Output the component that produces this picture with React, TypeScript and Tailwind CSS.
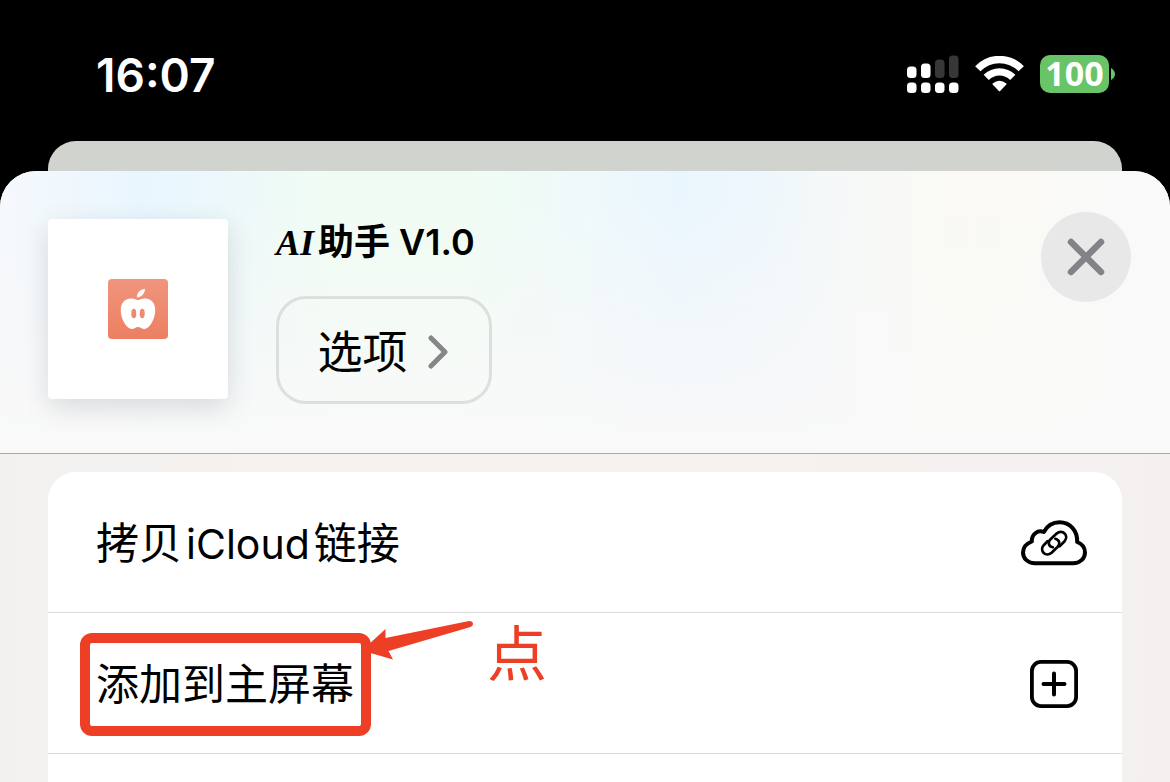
import type { ReactNode } from 'react';

const sans = "font-['Inter','Noto_Sans_CJK_SC',sans-serif]";

function SignalIcon() {
  return (
    <svg width="52" height="38" viewBox="0 0 52 38" aria-hidden="true">
      <g fill="#fff">
        <rect x="0" y="11.5" width="9.5" height="11.5" rx="3.5" />
        <rect x="14" y="8.5" width="9.5" height="14.5" rx="3.5" />
        <rect x="0" y="27.5" width="9.5" height="10.5" rx="3.5" />
        <rect x="14" y="27.5" width="9.5" height="10.5" rx="3.5" />
        <rect x="28" y="27.5" width="9.5" height="10.5" rx="3.5" />
        <rect x="42" y="27.5" width="9.5" height="10.5" rx="3.5" />
      </g>
      <g fill="#383636">
        <rect x="28" y="4.5" width="9.5" height="18.5" rx="3.5" />
        <rect x="42" y="0.5" width="9.5" height="22.5" rx="3.5" />
      </g>
    </svg>
  );
}

function WifiIcon() {
  return (
    <svg width="49" height="37" viewBox="0 0 49 37" aria-hidden="true">
      <g fill="none" stroke="#fff" strokeWidth="7.4">
        <path d="M2.8 12.8C14.8 .4 34.2 .4 46.2 12.8" />
        <path d="M11.2 21.4C18.8 14 30.2 14 37.800 21.400" />
      </g>
      <path d="M17.6 27.500Q24.5 22 31.4 27.500Q31.8 28 31.3 28.600L25.2 35Q24.5 35.700 23.8 35L17.7 28.600Q17.2 28 17.6 27.500Z" fill="#fff" />
    </svg>
  );
}

function AppleIcon() {
  return (
    <svg width="60" height="60" viewBox="0 0 60 60" aria-hidden="true">
      <defs>
        <linearGradient id="tile" x1="0" y1="0" x2="0" y2="1">
          <stop offset="0" stopColor="#f0957d" />
          <stop offset="1" stopColor="#ec7f62" />
        </linearGradient>
      </defs>
      <rect width="60" height="60" rx="4" fill="url(#tile)" />
      <path
        d="M30 21.3C27 20 25 19.3 22 19.5C16 20 12.8 25 12.8 31C12.8 37.500 15.500 43.500 19 47.500C21.500 50.300 24.500 50.500 27 49C29 47.800 31 47.800 33 49C35.500 50.500 38.500 50.300 41 47.500C44.500 43.500 47.200 37.500 47.200 31C47.200 25 44 20 38 19.500C35 19.300 33 20 30 21.300Z"
        fill="#fff"
      />
      <path d="M29 18.500C28.500 14 32 10.500 37 9.800C37 14.500 33.500 18.300 29 18.500Z" fill="#fff" />
      <ellipse cx="25.800" cy="34.500" rx="2.500" ry="4.800" fill="#ee8a70" />
      <ellipse cx="34.200" cy="34.500" rx="2.500" ry="4.800" fill="#ee8a70" />
    </svg>
  );
}

function CloudLinkIcon() {
  return (
    <svg width="66" height="46" viewBox="0 0 66 46" fill="none" stroke="#000" strokeLinecap="round" strokeLinejoin="round" aria-hidden="true">
      <path
        d="M14 43.300H52C59 43.300 64 38.500 64 32.500C64 27.500 61 23.800 56.200 22C56.600 10.500 49 2.200 38.500 2.200C31 2.200 26 6 22.800 12C16.500 9.500 10.500 14.500 10.800 21.500C5.500 23.500 2 27.500 2 32.500C2 38.500 7 43.300 14 43.300Z"
        strokeWidth="4"
      />
      <g strokeWidth="2.700">
        <path d="M31.800 27.300C27.500 26.300 26.600 22.300 29.300 19.500L35.600 13.600C41.500 8.800 48.300 15.500 43.600 21.200L38.600 26.200" />
        <path d="M34.400 18.800C38.600 20 39.400 24 36.700 26.800L30.600 32.800C24.800 37.600 18 30.900 22.700 25.200L26.500 21.300" />
      </g>
    </svg>
  );
}

function PlusSquareIcon() {
  return (
    <svg width="48" height="48" viewBox="0 0 48 48" fill="none" stroke="#000" strokeLinecap="round" aria-hidden="true">
      <rect x="1.900" y="1.900" width="44.200" height="44.200" rx="9" strokeWidth="3.800" />
      <path d="M24 13.500V34.500M13.500 24H34.500" strokeWidth="4" />
    </svg>
  );
}

function ActionRow({ label, icon, children }: { label: ReactNode; icon: ReactNode; children?: ReactNode }) {
  return (
    <li className="relative border-b border-[#dcdcdc]">
      <button type="button" className="flex h-[140px] w-full items-center justify-between pt-0.5 pl-12 text-left text-[43px] leading-none text-black">
        <span>{label}</span>
        <span className="mr-7 flex w-20 justify-center">{icon}</span>
      </button>
      {children}
    </li>
  );
}

function Annotation() {
  return (
    <div className="pointer-events-none absolute top-2 left-8 flex text-[#ec3f25]">
      <div className="mt-3 h-[103px] w-[291px] rounded-xl border-10 border-[#ec3f25]" />
      <svg className="-ml-1" width="108" height="40" viewBox="0 0 108 40" aria-hidden="true">
        <path
          d="M0 25L18.500 8V17L102 0Q106 0 106 3Q106 5 103.500 6L21.500 30L26 38.500L0 31Z"
          fill="currentColor"
        />
      </svg>
      <span className="ml-3 text-[60px] leading-[66px]">点</span>
    </div>
  );
}

export default function App() {
  return (
    <div className={`flex min-h-screen flex-col overflow-hidden bg-black text-black ${sans}`}>
      <header className="flex h-[141px] shrink-0 items-start justify-between pt-[54px] pr-[55px] pl-24 text-white">
        <time className="text-[46px] leading-[42px] font-semibold">16:07</time>
        <div className="flex h-10 items-center gap-4">
          <SignalIcon />
          <WifiIcon />
          <div className="flex items-center gap-[2px]">
            <span className="flex h-[38px] w-[69px] items-center justify-center rounded-[10px] bg-[#68c466] pb-0.5 font-['Open_Sans'] text-[34px] leading-none font-bold">
              100
            </span>
            <svg width="4" height="12" viewBox="0 0 4 12" aria-hidden="true">
              <path d="M0 0C2.500 1.500 4 3.500 4 6S2.500 10.500 0 12Z" fill="#68c466" />
            </svg>
          </div>
        </div>
      </header>

      <div className="mx-12 h-[30px] shrink-0 rounded-t-[28px] bg-[#d1d3cf]" />

      <main className="flex flex-1 flex-col overflow-hidden rounded-t-[36px] bg-[linear-gradient(90deg,#f3f1ef,#f6f2ef_50%,#f3f0ef)]">
        <section className="flex h-[283px] items-start border-b border-[#a9a9a9] bg-[linear-gradient(180deg,transparent_10%,#f9f9f9_95%),linear-gradient(90deg,#f6f9fc,#e9f6ff_12%,#ecf8fb_19%,#f0fcf3_28%,#f0fcf3_40%,#eff9fb_50%,#eaf6fe_58%,#eef7fc_65%,#f7f9f8_73%,#fbf9f4_83%,#f9f9f9_95%)] pt-12 pr-[39px] pl-12">
          <div className="flex size-[180px] shrink-0 items-center justify-center rounded bg-white shadow-[0_8px_28px_rgba(0,0,0,0.13)]">
            <AppleIcon />
          </div>
          <div className="ml-12 flex flex-1 flex-col items-start">
            <h1 className="text-[36px] leading-[46px] font-semibold">
              <span className="mr-1 font-['Liberation_Serif'] font-bold italic">AI</span>助手 V1.0
            </h1>
            <button type="button" className="mt-[30px] flex h-[108px] w-[216px] items-center justify-center gap-5 rounded-[30px] border-3 border-[#dce0dd] pt-1 pr-0.5 text-[45px] leading-none">
              选项
              <svg width="21" height="34" viewBox="0 0 21 34" fill="none" aria-hidden="true">
                <path d="M3 3L17 17L3 31" stroke="#858786" strokeWidth="5" strokeLinecap="round" strokeLinejoin="round" />
              </svg>
            </button>
          </div>
          <button type="button" aria-label="关闭" className="-mt-[7px] flex size-[90px] items-center justify-center rounded-full bg-[#e9e8e9]">
            <svg width="38" height="38" viewBox="0 0 38 38" aria-hidden="true">
              <path d="M4 4L34 34M34 4L4 34" stroke="#828287" strokeWidth="6.500" strokeLinecap="round" />
            </svg>
          </button>
        </section>

        <ul className="mx-12 mt-[18px] flex-1 rounded-t-[28px] bg-white pb-7">
          <ActionRow
            label={
              <>
                拷贝<span className="mx-1 text-[41px]">iCloud</span>链接
              </>
            }
            icon={<CloudLinkIcon />}
          />
          <ActionRow label="添加到主屏幕" icon={<PlusSquareIcon />}>
            <Annotation />
          </ActionRow>
        </ul>
      </main>
    </div>
  );
}
